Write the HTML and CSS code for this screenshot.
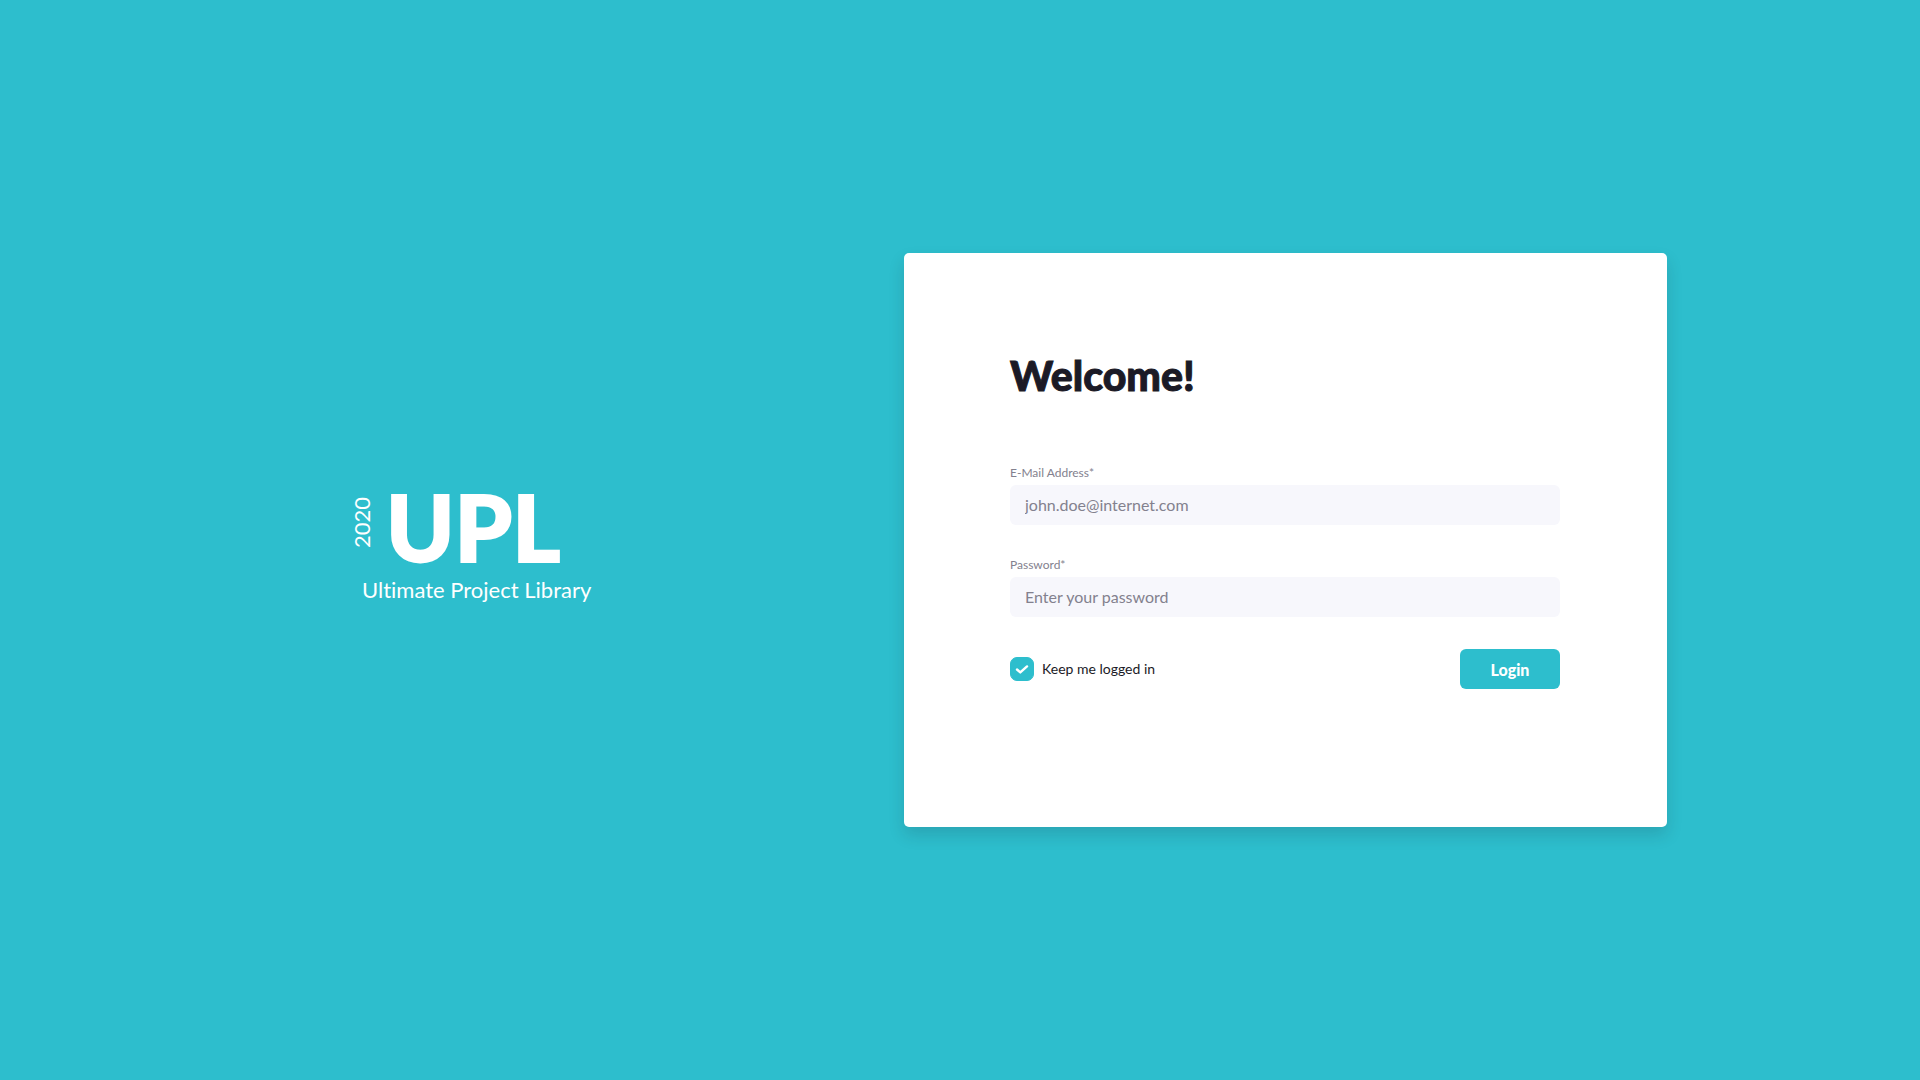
FILE: index.html
```html
<!DOCTYPE html>
<html lang="en">
<head>
  <meta charset="utf-8">
  <meta name="viewport" content="width=device-width, initial-scale=1">
  <title>UPL – Login</title>
  <link rel="stylesheet" href="styles.css">
</head>
<body>
  <main class="page">
    <header class="brand">
      <div class="brand-row">
        <span class="brand-year">2020</span>
        <span class="brand-name">UPL</span>
      </div>
      <p class="brand-tagline">Ultimate Project Library</p>
    </header>
    <form class="card">
      <h1 class="title">Welcome!</h1>
      <div class="field">
        <label class="field-label" for="email">E-Mail Address*</label>
        <input class="field-input" id="email" type="email" placeholder="john.doe@internet.com">
      </div>
      <div class="field">
        <label class="field-label" for="password">Password*</label>
        <input class="field-input" id="password" type="password" placeholder="Enter your password">
      </div>
      <div class="actions">
        <label class="keep" for="keep">
          <span class="check">
            <input class="check-input" id="keep" type="checkbox" checked>
            <svg class="check-mark" viewBox="0 0 24 24" aria-hidden="true"><path d="M7 12.5l3.3 2.9 6.7-6"/></svg>
          </span>
          Keep me logged in
        </label>
        <button class="login" type="submit">Login</button>
      </div>
    </form>
  </main>
</body>
</html>
```

FILE: styles.css
```css
:root {
  --primary: #2dbecd;
  --ink: #1b1a26;
  --muted: #83818e;
  --field: #f7f7fc;
}

* {
  box-sizing: border-box;
}

body {
  margin: 0;
  background: var(--primary);
  color: var(--ink);
  font-family: Lato, sans-serif;
  font-variant-ligatures: none;
}

.page {
  display: flex;
  align-items: center;
  justify-content: space-between;
  gap: 48px;
  max-width: 1414px;
  min-height: 100vh;
  margin: 0 auto;
}

.brand {
  margin-left: 99px;
  padding-bottom: 2px;
  color: #fff;
}

.brand-row {
  display: flex;
  align-items: flex-start;
  gap: 14px;
}

.brand-year {
  margin-top: 21px;
  font-size: 22px;
  line-height: 20px;
  writing-mode: vertical-rl;
  transform: rotate(180deg);
}

.brand-name {
  font-size: 92px;
  font-weight: 900;
  line-height: 102px;
  -webkit-text-stroke: 2px currentColor;
}

.brand-tagline {
  margin: 0 0 0 10px;
  font-size: 22px;
  line-height: 24px;
}

.card {
  width: 54%;
  max-width: 763px;
  padding: 100px 107px 138px 106px;
  border-radius: 5px;
  background: #fff;
  box-shadow: 0 8px 16px rgba(27, 26, 38, 0.15);
}

.title {
  margin: 0 0 66px;
  font-size: 41px;
  font-weight: 900;
  line-height: 46px;
  -webkit-text-stroke: 1px currentColor;
}

.field {
  display: flex;
  flex-direction: column;
  gap: 4px;
  margin-bottom: 32px;
}

.field-label {
  color: var(--muted);
  font-size: 12px;
  line-height: 16px;
}

.field-input {
  width: 100%;
  height: 40px;
  padding: 0 15px 2px;
  border: 0;
  border-radius: 6px;
  background: var(--field);
  color: var(--ink);
  font: 16px Lato, sans-serif;
}

.field-input::placeholder {
  color: var(--muted);
  opacity: 1;
}

.actions {
  display: flex;
  align-items: center;
  justify-content: space-between;
}

.keep {
  display: flex;
  align-items: center;
  gap: 8px;
  font-size: 14px;
  line-height: 24px;
}

.check {
  display: grid;
  width: 24px;
  height: 24px;
}

.check-input,
.check-mark {
  grid-area: 1 / 1;
  width: 24px;
  height: 24px;
}

.check-input {
  margin: 0;
  border: 1px solid var(--primary);
  border-radius: 7px;
  appearance: none;
}

.check-input:checked {
  background: var(--primary);
}

.check-mark {
  fill: none;
  stroke: #fff;
  stroke-width: 2.4;
  stroke-linecap: round;
  stroke-linejoin: round;
  pointer-events: none;
}

.login {
  width: 100px;
  height: 40px;
  padding: 0;
  border: 0;
  border-radius: 6px;
  background: var(--primary);
  color: #fff;
  font: 900 16px Lato, sans-serif;
}
```
